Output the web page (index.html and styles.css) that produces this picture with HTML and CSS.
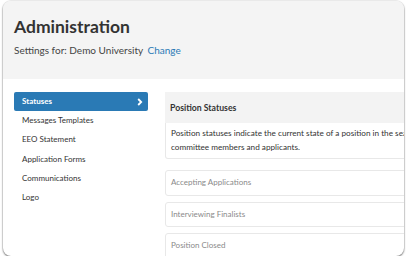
FILE: index.html
```html
<!DOCTYPE html>
<html lang="en">
<head>
    <meta charset="UTF-8">
    <meta name="viewport" content="width=device-width, initial-scale=1.0">
    <title>Administration</title>
    <link rel="stylesheet" href="styles.css">
</head>
<body>
    <div class="window">
        <div class="page-header">
            <h1>Administration</h1>
            <p class="settings-for">Settings for: Demo University <a href="#" class="change-link">Change</a></p>
        </div>

        <div class="content">
            <ul class="side-nav">
                <li class="nav-item active">
                    Statuses
                    <svg class="chevron" width="6" height="8" viewBox="0 0 6 8"><path d="M1.2 1 L4.2 4 L1.2 7" fill="none" stroke="#fff" stroke-width="1.8"/></svg>
                </li>
                <li class="nav-item">Messages Templates</li>
                <li class="nav-item">EEO Statement</li>
                <li class="nav-item">Application Forms</li>
                <li class="nav-item">Communications</li>
                <li class="nav-item">Logo</li>
            </ul>

            <div class="main-panel">
                <div class="panel-heading">Position Statuses</div>
                <div class="panel-body">
                    Position statuses indicate the current state of a position in the search process to committee members and applicants.
                </div>

                <div class="status-list">
                    <div class="status-item">Accepting Applications</div>
                    <div class="status-item">Interviewing Finalists</div>
                    <div class="status-item">Position Closed</div>
                </div>
            </div>
        </div>
    </div>
</body>
</html>
```

FILE: styles.css
```css
body {
    margin: 0;
    background-color: #fff;
    font-family: Lato, "Open Sans", Arial, sans-serif;
    color: #333;
}
.window {
    margin: 1px 3px 0 3px;
    height: 255px;
    border-radius: 8px;
    overflow: hidden;
    background-color: #fff;
    box-shadow: 0 1px 2px rgba(0,0,0,0.55), 0 0 0 1px rgba(0,0,0,0.06);
}
.page-header {
    background-color: #f4f4f4;
    height: 78px;
    padding: 15px 0 0 11px;
    box-sizing: border-box;
}
h1 {
    margin: 0;
    font-size: 17.5px;
    font-weight: bold;
    color: #333;
    line-height: 22px;
}
.settings-for {
    margin: 6px 0 0 0;
    font-size: 10px;
    color: #444;
}
.change-link {
    color: #2a7ab6;
    text-decoration: none;
    margin-left: 2px;
}
.content {
    display: flex;
    gap: 17px;
    padding: 13px 0 0 11px;
}
.side-nav {
    list-style: none;
    margin: 0;
    padding: 0;
    width: 134px;
    flex-shrink: 0;
}
.nav-item {
    height: 19.3px;
    line-height: 19.3px;
    padding-left: 8px;
    font-size: 8px;
    color: #333;
}
.nav-item.active {
    height: 19px;
    line-height: 19px;
    background-color: #2a7ab5;
    color: #fff;
    font-weight: bold;
    border-radius: 2px;
    display: flex;
    justify-content: space-between;
    align-items: center;
    padding-right: 5px;
}
.main-panel {
    width: 315px;
    flex-shrink: 0;
}
.panel-heading {
    background-color: #f3f3f3;
    height: 31px;
    line-height: 31px;
    padding-left: 5px;
    font-size: 8.7px;
    font-weight: bold;
    color: #333;
}
.panel-body {
    border: 1px solid #e8e8e8;
    border-top: none;
    border-radius: 0 0 3px 3px;
    padding: 3px 5px 4px 5px;
    font-size: 8.2px;
    line-height: 14px;
    color: #333;
}
.status-list {
    display: flex;
    flex-direction: column;
    gap: 6px;
    margin-top: 11px;
}
.status-item {
    border: 1px solid #e8e8e8;
    border-radius: 3px;
    height: 25.5px;
    box-sizing: border-box;
    line-height: 23px;
    padding-left: 5px;
    font-size: 8px;
    color: #8a8a8a;
}
```
